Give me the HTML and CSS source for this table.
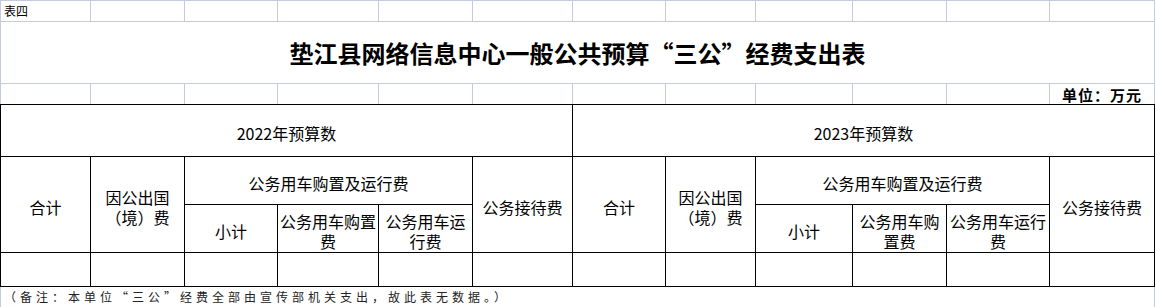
FILE: index.html
```html
<!DOCTYPE html>
<html lang="zh-CN">
<head>
<meta charset="utf-8">
<title>垫江县网络信息中心一般公共预算“三公”经费支出表</title>
<link rel="stylesheet" href="styles.css">
</head>
<body>
<table class="sheet">
  <colgroup>
    <col class="w90"><col class="w94"><col class="w93"><col class="w101"><col class="w94"><col class="w100">
    <col class="w93"><col class="w90"><col class="w97"><col class="w94"><col class="w103"><col class="w105">
  </colgroup>
  <tr class="r-label">
    <td class="label">表四</td><td></td><td></td><td></td><td></td><td></td>
    <td></td><td></td><td></td><td></td><td></td><td></td>
  </tr>
  <tr class="r-title">
    <td class="title" colspan="12">垫江县网络信息中心一般公共预算“三公”经费支出表</td>
  </tr>
  <tr class="r-unit">
    <td></td><td></td><td></td><td></td><td></td><td></td>
    <td></td><td></td><td></td><td></td><td></td><td class="unit">单位：万元</td>
  </tr>
  <tr class="r-year">
    <td class="b" colspan="6">2022年预算数</td>
    <td class="b" colspan="6">2023年预算数</td>
  </tr>
  <tr class="r-h1">
    <td class="b" rowspan="2">合计</td>
    <td class="b" rowspan="2">因公出国（境）费</td>
    <td class="b" colspan="3">公务用车购置及运行费</td>
    <td class="b" rowspan="2">公务接待费</td>
    <td class="b" rowspan="2">合计</td>
    <td class="b" rowspan="2">因公出国（境）费</td>
    <td class="b" colspan="3">公务用车购置及运行费</td>
    <td class="b" rowspan="2">公务接待费</td>
  </tr>
  <tr class="r-h2">
    <td class="b">小计</td>
    <td class="b">公务用车购置费</td>
    <td class="b">公务用车运行费</td>
    <td class="b">小计</td>
    <td class="b">公务用车购置费</td>
    <td class="b">公务用车运行费</td>
  </tr>
  <tr class="r-data">
    <td class="b"></td><td class="b"></td><td class="b"></td><td class="b"></td><td class="b"></td><td class="b"></td>
    <td class="b"></td><td class="b"></td><td class="b"></td><td class="b"></td><td class="b"></td><td class="b"></td>
  </tr>
  <tr class="r-note">
    <td class="note" colspan="12">（备注：本单位“三公”经费全部由宣传部机关支出，故此表无数据。）</td>
  </tr>
</table>
</body>
</html>
```

FILE: styles.css
```css
html, body {
  margin: 0;
  padding: 0;
  background: #ffffff;
}

body {
  font-family: "Noto Sans CJK SC", "Noto Sans", sans-serif;
  color: #000000;
}

.sheet {
  border-collapse: collapse;
  table-layout: fixed;
  width: 1155px;
}

.w90 { width: 90px; }
.w93 { width: 93px; }
.w94 { width: 94px; }
.w97 { width: 97px; }
.w100 { width: 100px; }
.w101 { width: 101px; }
.w103 { width: 103px; }
.w105 { width: 105px; }

.sheet td {
  border: 1px solid #c3cbdd;
  padding: 0 1px;
  font-size: 16px;
  line-height: 20px;
  text-align: center;
  vertical-align: middle;
  overflow: hidden;
}

.r-label { height: 21px; }
.r-title { height: 62px; }
.r-unit { height: 21px; }
.r-year { height: 52px; }
.r-h1 { height: 48px; }
.r-h2 { height: 48px; }
.r-data { height: 34px; }
.r-note { height: 21px; }

.sheet td.label {
  font-size: 12px;
  line-height: 14px;
  text-align: left;
  padding-left: 3px;
}

.sheet td.title {
  font-size: 24px;
  font-weight: 700;
  line-height: 30px;
  letter-spacing: 0;
}

.r-unit td {
  border-bottom-color: #000000;
}

.sheet td.unit {
  font-size: 15px;
  font-weight: 700;
  line-height: 16px;
  vertical-align: bottom;
  padding-bottom: 1px;
  letter-spacing: 1px;
}

.sheet td.b {
  border-color: #000000;
  padding-top: 4px;
}

.r-data td.b {
  padding-top: 0;
}

.sheet td.note {
  font-size: 12px;
  line-height: 14px;
  letter-spacing: 4px;
  text-align: left;
  padding-left: 3px;
  color: #222222;
}
```
